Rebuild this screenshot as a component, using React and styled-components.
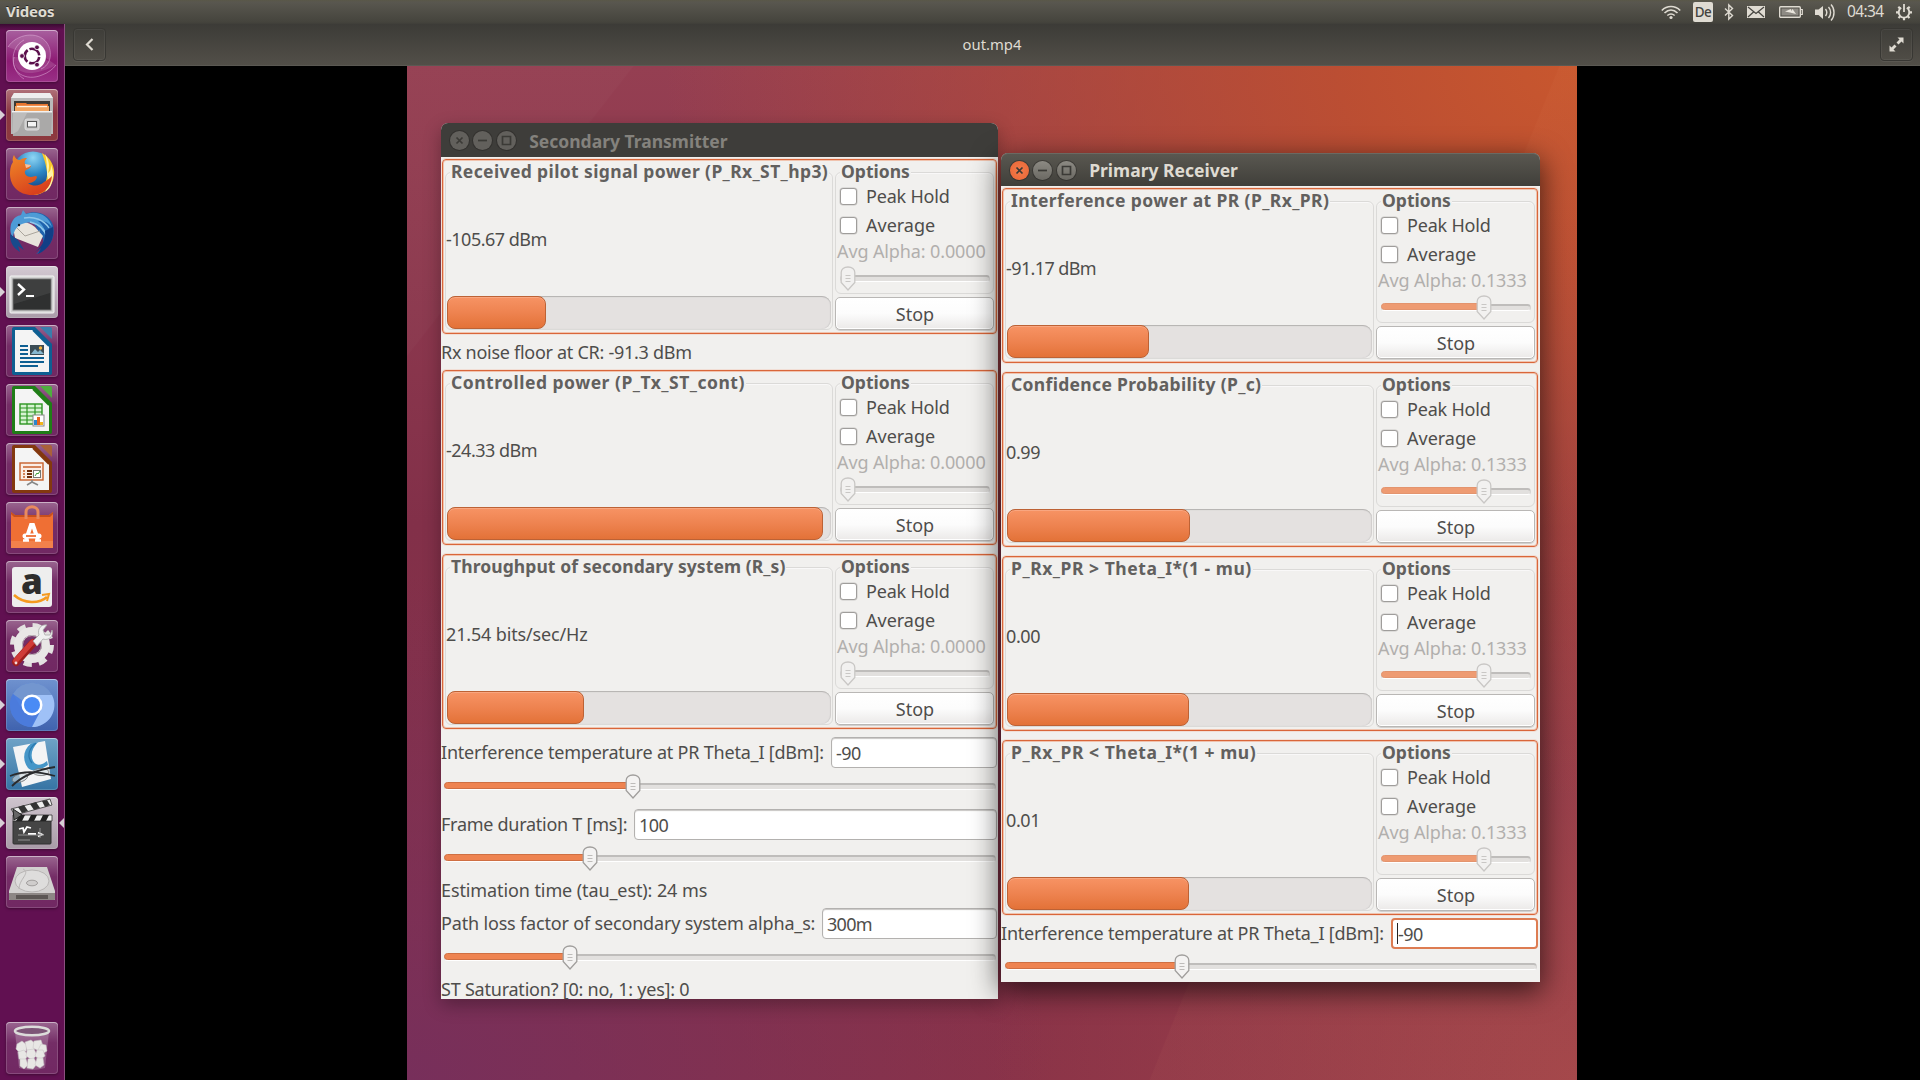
import React from "react";
import styled, { createGlobalStyle } from "styled-components";

const Global = createGlobalStyle`
  * { box-sizing: border-box; }
  body { margin: 0; background: #000; overflow: hidden; font-family: "Noto Sans", "Open Sans", sans-serif; }
`;

const Screen = styled.div`
  width: 1920px; height: 1080px; display: flex; flex-direction: column; overflow: hidden;
`;
const TopPanel = styled.header`
  height: 24px; flex: none; display: flex; align-items: center; justify-content: space-between;
  padding: 0 7px 0 6px; color: #dfdbd2; background: linear-gradient(#5a5848 0, #59574f 2px, #45443d 22px, #3f3e39);
`;
const AppName = styled.span`
  font-size: 15px; font-weight: 700; line-height: 22px; height: 24px; letter-spacing: -0.2px; white-space: nowrap; text-shadow: 0 -1px 0 #2b2a27;
`;
const Indicators = styled.div`display: flex; align-items: center; height: 24px;`;
const IndIcon = styled.svg`
  display: block; flex: none; width: ${p => p.$w}px; height: 24px; margin-right: ${p => p.$gap}px;
  fill: none; stroke: #dfdbd2; stroke-width: 1.6;
`;
const Keyboard = styled.span`
  width: 20px; height: 20px; margin-right: 11px; border-radius: 2px; background: #dfdbd2; color: #45443f;
  font-size: 13.5px; font-weight: 500; line-height: 20px; text-align: center; letter-spacing: -0.5px;
`;
const Clock = styled.span`width: 37px; margin-right: 11px; font-size: 15.5px; line-height: 22px; height: 24px; letter-spacing: -0.65px; white-space: nowrap;`;

const Main = styled.div`flex: 1; display: flex; min-height: 0;`;
const Launcher = styled.nav`
  width: 65px; flex: none; padding: 6px 0 6px 6px; display: flex; flex-direction: column; gap: 7px;
  background: linear-gradient(#3a0a32 0, #611051 6px, #611051 100%); border-right: 1px solid #8b4f7f;
`;
const Tile = styled.div`
  position: relative; width: 52px; height: 52px; flex: none; border-radius: 4px; background: ${p => p.$bg};
  box-shadow: inset 0 0 0 1px rgba(255,255,255,.16), inset 0 1px 0 rgba(255,255,255,.4), 0 1px 3px rgba(0,0,0,.35);
  margin-top: ${p => (p.$bottom ? "auto" : 0)};
  & > svg { display: block; width: 52px; height: 52px; }
`;
const Arrow = styled.i`
  position: absolute; top: 21px; width: 0; height: 0; border: 5px solid transparent;
  ${p => (p.$right ? "right: -6px; border-right-color: #d8d0d6; border-left: 0;" : "left: -6px; border-left-color: #d8d0d6; border-right: 0;")}
`;

const Player = styled.main`flex: 1; display: flex; flex-direction: column; min-width: 0;`;
const HeaderBar = styled.div`
  height: 42px; flex: none; display: flex; align-items: center; justify-content: space-between; padding: 0 7px 1px 8px;
  background: linear-gradient(#3c3b37, #524f48); border-bottom: 1px solid #5b5953; color: #dfdbd2;
`;
const HeaderButton = styled.button`
  width: 33px; height: 33px; padding: 0; border: 1px solid #383733; border-radius: 4px; color: #dfdbd2;
  background: transparent; box-shadow: inset 0 0 0 1px rgba(255,255,255,.05), 0 1px 0 rgba(255,255,255,.06);
  svg { display: block; width: 31px; height: 31px; }
`;
const FileName = styled.span`font-size: 14.8px; line-height: 24px; white-space: nowrap; margin-right: 2px;`;
const Stage = styled.div`flex: 1; min-height: 0; display: flex; background: #000; padding-left: 342px;`;
const Desktop = styled.section`
  position: relative; width: 1170px; height: 1014px; overflow: hidden;
  background:
    linear-gradient(128deg, rgba(255,255,255,.02) 0 11.5%, transparent 11.6%),
    linear-gradient(292deg, rgba(255,170,120,.04) 0 27%, transparent 27.1%),
    radial-gradient(ellipse 78% 72% at 100% 0%, #c8572e 0%, rgba(192,80,47,.9) 25%, rgba(176,68,52,0) 100%),
    radial-gradient(ellipse 55% 50% at 0% 100%, #772f5b 0%, rgba(118,47,92,0) 100%),
    radial-gradient(ellipse 50% 60% at 100% 100%, #a14449 0%, rgba(161,68,73,0) 100%),
    linear-gradient(#953f52, #823049 45%, #8a3348 100%);
`;

const Win = styled.article`
  position: absolute; left: ${p => p.$x}px; top: ${p => p.$y}px; width: ${p => p.$w}px; height: ${p => p.$h}px;
  display: flex; flex-direction: column; border-radius: 7px 7px 0 0; background: #f1f0ee; color: #4e4d4b;
  box-shadow: ${p => (p.$active ? "0 8px 28px 2px rgba(0,0,0,.62)" : "0 6px 18px rgba(0,0,0,.3)")};
`;
const TitleBar = styled.div`
  height: ${p => (p.$active ? 33 : 34)}px; flex: none; display: flex; align-items: center; padding: 1px 0 0 9px; gap: 4px; border-radius: 7px 7px 0 0;
  background: ${p => (p.$active ? "linear-gradient(#5a5851, #403f3a)" : "#3e3d3a")};
  box-shadow: ${p => (p.$active ? "inset 0 1px 0 #6b6962" : "none")};
`;
const WinButton = styled.span`
  width: 19px; height: 19px; border-radius: 50%; margin-right: .4px;
  background: ${p => (p.$close ? "radial-gradient(#f27c4c, #ea6534)" : p.$active ? "linear-gradient(#8c8a83,#6b6963)" : "#62605c")};
  box-shadow: 0 0 0 1px rgba(40,38,35,.5);
  svg { display: block; width: 19px; height: 19px; fill: none; stroke: #3b3a36; stroke-width: 1.7; }
`;
const Text = styled.span`
  display: inline-block; white-space: pre; line-height: 22px; font-size: 18px;
  letter-spacing: ${p => p.$ls || 0}px;
`;
const Title = styled(Text)`
  margin-left: 9px; font-weight: 700; font-size: 17.5px; color: ${p => (p.$active ? "#dfdbd2" : "#84827d")};
`;
const Body = styled.div`flex: 1; min-height: 0; display: flex; flex-direction: column; padding: 2px 1px 0 0;`;

const Meter = styled.section`
  width: ${p => p.$w}px; height: 175px; flex: none; margin: ${p => p.$mt || 0}px 0 0 1px; padding: 12px 2px 3px; display: flex; gap: 2px;
  border: 1px solid #d9663a; border-radius: 4px; box-shadow: inset 0 0 0 1px rgba(240,150,110,.5), 0 0 0 1px rgba(240,190,165,.35);
`;
const Frame = styled.div`
  display: flex; flex-direction: column; border: 1px solid #dbdad8; border-radius: 6px; box-shadow: inset 0 1px 0 #f9f8f8;
  width: ${p => (p.$w ? p.$w + "px" : "auto")}; height: ${p => (p.$h ? p.$h + "px" : "auto")};
`;
const Legend = styled(Text)`
  align-self: flex-start; flex: none; height: 21px; line-height: 21px; margin: -12px 0 1px 4px; padding: 0 1px;
  font-size: 17.5px; font-weight: 700; color: #62605e; background: #f1f0ee;
`;
const Value = styled.div`flex: 1; display: flex; align-items: center; padding-bottom: 2px;`;
const Progress = styled.div`
  height: 33px; margin: 0 1px; border-radius: 9px; background: #e4e1e0; box-shadow: inset 0 2px 1px -1px #b4b2b0, inset -1px 0 1px #d0cecd;
`;
const Fill = styled.div`
  height: 33px; border-radius: 8px; border: 1px solid #bd6235;
  background: linear-gradient(#f79364, #ee8350 50%, #e37238); box-shadow: inset 0 1px 0 #f9a680;
`;
const OptionsCol = styled.div`flex: 1; display: flex; flex-direction: column; gap: 3px;`;
const Check = styled.label`
  height: ${p => p.$h}px; flex: none; display: flex; align-items: center; gap: 9px; padding: 0 0 2px 4px;
`;
const Box = styled.span`
  width: 17px; height: 17px; border: 1px solid #9f9d9b; border-radius: 3px; background: #fff; box-shadow: 0 0 0 .5px #c9c7c5;
`;
const Alpha = styled(Text)`height: 21px; line-height: 20px; color: #b1afad; padding-left: 1px;`;
const StopButton = styled.button`
  height: 33px; padding: 0 0 0 1px; border: 1px solid #b9b7b5; border-radius: 5px; font-family: inherit; color: #4e4d4b;
  background: linear-gradient(#fff, #fcfcfc 50%, #ebe9e8); box-shadow: 0 1px 0 #d2d0ce, inset 0 0 0 1px #fff;
`;
const SliderBox = styled.div`
  position: relative; height: 24px; flex: none; display: flex; align-items: center;
  margin: ${p => p.$m};
`;
const Track = styled.div`
  flex: 1; height: 7px; border-radius: 4px; background: #e2e0de; border: 1px solid #d6d4d2; border-top: 2px solid #bfbdbb; border-bottom-color: #fff;
`;
const TrackFill = styled.div`
  position: absolute; left: 0; top: 8px; height: 7px; border-radius: 4px;
  background: ${p => (p.$off ? "#ee9b72" : "#ee8350")}; border: 1px solid ${p => (p.$off ? "#e3946e" : "#cf6f42")};
`;
const Thumb = styled.svg`position: absolute; top: 0; width: 16px; height: 25px;`;
const Row = styled.div`height: ${p => p.$h}px; flex: none; padding-top: ${p => p.$pt || 0}px; display: flex; align-items: center;`;
const EntryRow = styled.div`height: 31px; flex: none; margin-top: ${p => p.$mt}px; display: flex; align-items: center;`;
const EntryLabel = styled.div`width: ${p => p.$w}px; flex: none;`;
const Entry = styled.div`
  flex: 1; height: 31px; display: flex; align-items: center; padding-left: 4px; background: #fff; border-radius: 4px;
  border: ${p => (p.$focus ? "2px solid #dd7c52" : "1px solid #b3b1af")};
  box-shadow: ${p => (p.$focus ? "none" : "inset 0 1px 1px #c8c6c4")}; margin-right: ${p => p.$mr || 0}px;
`;
const Caret = styled.i`width: 1px; height: 21px; background: #222;`;

function Slider({ at, off, m = "0", filled = true }) {
  return (
    <SliderBox $m={m}>
      <Track />
      {filled && <TrackFill $off={off} style={{ width: at }} />}
      <Thumb viewBox="0 0 16 25" style={{ left: at - 8 }}>
        <path d="M1.2 6.5C1.2 3 4 1 8 1s6.8 2 6.8 5.500v10L8 24 1.200 16.500z" fill={off ? "#f2f1f0" : "#f4f3f2"} stroke={off ? "#c9c7c5" : "#a09e9c"} strokeWidth="1.300" />
        <path d="M5.500 9.500h5M5.500 12.500h5M5.500 15.500h5" stroke={off ? "#c9c7c5" : "#bebcba"} strokeWidth="1" />
      </Thumb>
    </SliderBox>
  );
}

function Panel({ w, frame, mt, name, ls, value, vls, fill, alpha, at }) {
  return (
    <Meter $w={w} $mt={mt}>
      <Frame $w={frame}>
        <Legend $ls={ls}>{name}</Legend>
        <Value><Text $ls={vls}>{value}</Text></Value>
        <Progress><Fill style={{ width: fill }} /></Progress>
      </Frame>
      <OptionsCol>
        <Frame $h={122}>
          <Legend>Options</Legend>
          <Check $h={28}><Box /><Text $ls={-0.2}>Peak Hold</Text></Check>
          <Check $h={30}><Box /><Text>Average</Text></Check>
          <Alpha $ls={-0.12}>Avg Alpha: {alpha}</Alpha>
          <Slider at={at} off filled={at > 20} m="4px 3px 0 4px" />
        </Frame>
        <StopButton><Text>Stop</Text></StopButton>
      </OptionsCol>
    </Meter>
  );
}

function Buttons({ active }) {
  return (
    <>
      <WinButton $close={active} $active={active}><svg viewBox="0 0 19 19"><path d="M6.500 6.500l6 6M12.500 6.500l-6 6" /></svg></WinButton>
      <WinButton $active={active}><svg viewBox="0 0 19 19"><path d="M5 9.500h9" /></svg></WinButton>
      <WinButton $active={active}><svg viewBox="0 0 19 19"><path d="M5.500 5.500h8v8h-8z" /></svg></WinButton>
    </>
  );
}

const glass = "linear-gradient(rgba(255,255,255,.36), rgba(255,255,255,.12) 40%, rgba(255,255,255,.1))";

const Doc = ({ dark, mid, children }) => (
  <svg viewBox="0 0 52 52">
    <path d="M6 4q0-2 2-2h21l17 17v29q0 2-2 2H8q-2 0-2-2z" fill={dark} />
    <path d="M34 2h10q2 0 2 2v10z" fill={mid} />
    <path d="M9 5h18l16 16v26H9z" fill="#f4f4f4" />
    <path d="M27 5l16 16" stroke={dark} strokeWidth="2" />
    {children}
  </svg>
);

const icons = [
  { bg: "linear-gradient(#a8609f, #8d1b74 60%, #9a3086)", art: (
    <svg viewBox="0 0 52 52">
      <g fill="none" stroke="#d79fce" strokeOpacity=".6" strokeWidth="1">
        <path d="M2 17C10 4 32 0 41 13c6 9 4 22-6 26M8 27C4 42 20 52 36 45c6-2 11-6 14-10M18 49C4 40 3 18 18 10" />
      </g>
      <path d="M2 17C10 4 32 0 41 13c3 6 4 12 2 18L26 26zM8 27C6 42 22 50 50 35L40 28z" fill="#fff" fillOpacity=".13" />
      <circle cx="26" cy="26" r="14" fill="#fff" />
      <circle cx="26" cy="26" r="7.300" fill="none" stroke="#5b0f4c" strokeWidth="2.600" strokeDasharray="13.300 2" strokeDashoffset="-1" />
      <g fill="#5b0f4c" stroke="#fff" strokeWidth=".8"><circle cx="16" cy="26" r="2.400" /><circle cx="31" cy="17.300" r="2.400" /><circle cx="31" cy="34.700" r="2.400" /></g>
    </svg>) },
  { left: 1, bg: "linear-gradient(#b0727a, #8a3542 45%, #8d3a3e)", art: (
    <svg viewBox="0 0 52 52">
      <path d="M8 4h36l3 5v36H5V9z" fill="#b9b9b9" /><path d="M8 4h36l3 5H5z" fill="#eee" />
      <path d="M8 12h36v10H8z" fill="#3d3a36" />
      <path d="M10 14h10l1 1h21v7H10z" fill="#e9762f" /><path d="M9 17h34v5H9z" fill="#f4a763" /><path d="M11 17.500h30" stroke="#fff3e2" strokeWidth="1.400" />
      <path d="M6 22h40l-1 25H7z" fill="#aaa9a8" /><path d="M6 22h40v1.500H6z" fill="#f1f1f1" /><path d="M7 24h14L12 42l-5 3z" fill="#bdbcbb" />
      <rect x="19" y="30" width="14" height="11" rx="2" fill="#cbcaca" stroke="#ddd" /><rect x="21.500" y="32.500" width="9" height="5.500" fill="#f4f4f4" stroke="#555" />
    </svg>) },
  { bg: glass, art: (
    <svg viewBox="0 0 52 52">
      <defs>
        <radialGradient id="ffb" cx=".5" cy=".15" r=".9"><stop offset="0" stopColor="#8fd6f4" /><stop offset=".45" stopColor="#2a86c4" /><stop offset="1" stopColor="#0c2a6b" /></radialGradient>
        <linearGradient id="ffo" x1="0" y1="0" x2=".5" y2="1"><stop offset="0" stopColor="#f08a28" /><stop offset="1" stopColor="#d8401d" /></linearGradient>
      </defs>
      <circle cx="27" cy="24" r="20.500" fill="url(#ffb)" />
      <path d="M36 5c9 5 13 14 12 22-1 12-10 20-21 20C36 42 42 34 41 24c-1-8-3-13-5-19z" fill="#f9c928" />
      <path d="M39 6c4 6 5 12 3 19 3-2 3-5 3-8 2 5 3 11 1 17-1 5-4 8-7 10 3-5 4-11 2-17 0-8 0-14-2-21z" fill="#fff3a8" />
      <path d="M8 7c1 3 3 5 6 5 3-2 5-2 7-2-2 2-3 4-2 6l6 2c-1 3-4 3-6 5-1 3 2 6 6 6 3 0 5-2 6 0-1 4-5 6-9 6 5 4 12 3 16-1 3-2 5-3 8-6-1 12-9 19-20 19C13 47 4 38 4 26c0-6 1-9 3-12-1-3 0-5 1-7z" fill="url(#ffo)" />
      <path d="M19 16l6 1c-1 2-3 2-5 3z" fill="#f5c3a0" />
    </svg>) },
  { bg: glass, art: (
    <svg viewBox="0 0 52 52">
      <path d="M13 12C22 1 42 4 47 18c3 13-4 25-17 29 6-5 8-10 7-15L24 10z" fill="#1f62ac" />
      <path d="M7 20c5-8 14-6 22 0l8 9-5 11-23-9z" fill="#e8e4dc" /><path d="M10 20l9 9 15-5" fill="none" stroke="#aaa59c" />
      <path d="M5 17C8 10 11 9 15 8l2-5 3 4c11-4 23 1 26 13-4-5-9-7-14-6 4 3 8 9 8 15-6-12-16-16-24-12-5 2-8 6-9 13-3-3-3-8-2-13z" fill="#4d9bd6" />
      <path d="M18 11c10-2 20 2 25 10M24 15c9 2 15 8 17 16M37 22c4 5 4 13-1 20" fill="none" stroke="#8fc7ea" strokeWidth="1.400" />
      <path d="M4 27c0 10 4 14 10 18l-2-6 6 4-6-10z" fill="#174a8c" /><path d="M47 20c2 12-4 22-15 27l3-6-6 4c7-5 11-13 10-21z" fill="#123f86" />
      <circle cx="13" cy="18" r="1.200" fill="#123" />
    </svg>) },
  { left: 1, bg: "linear-gradient(#d3c9d2, #a99ba8)", art: (
    <svg viewBox="0 0 52 52">
      <rect x="4" y="10" width="44" height="37" rx="1" fill="#d2d2d2" stroke="#f5f5f5" />
      <rect x="7" y="13" width="38" height="31" fill="#2f3030" stroke="#777" /><path d="M8 14h36v13L8 38z" fill="#4b4c4c" opacity=".55" />
      <path d="M12 18l6 5.500-6 5.500" fill="none" stroke="#fff" strokeWidth="2.400" /><path d="M20 30h8" stroke="#fff" strokeWidth="2" />
    </svg>) },
  { bg: glass, art: (
    <Doc dark="#0e5f92" mid="#3a7dab">
      <path d="M14 21h8M14 25h8M14 29h8M14 33h24M14 37h24M14 41h18" stroke="#0e5f92" strokeWidth="1.800" />
      <rect x="24" y="20" width="14" height="10" fill="#3b4c55" /><path d="M25 29l4-5 3 3 2-2 4 4z" fill="#86b7cf" /><circle cx="34.500" cy="23" r="1.700" fill="#f4b63d" />
    </Doc>) },
  { bg: glass, art: (
    <Doc dark="#1f7d17" mid="#4fae3f">
      <rect x="14" y="20" width="22" height="20" fill="#d7f3d2" stroke="#2b9420" strokeWidth="1.400" />
      <path d="M14 24h22M14 28h22M14 32h22M14 36h22M21 20v20M29 20v20" stroke="#2b9420" strokeWidth="1.200" />
      <rect x="27" y="31" width="11" height="11" fill="#fff" stroke="#888" /><path d="M28 36h3v5h-3z" fill="#2a86cf" /><path d="M31 33h3v8h-3z" fill="#e8631d" /><path d="M34 38h3v3h-3z" fill="#f1b51c" />
    </Doc>) },
  { bg: glass, art: (
    <Doc dark="#83380f" mid="#a9603a">
      <rect x="14" y="20" width="23" height="17" fill="#fbeee6" stroke="#c7602b" strokeWidth="1.400" />
      <path d="M17 24h18" stroke="#c7602b" strokeWidth="1.500" /><path d="M17 28h2M17 31h2M17 34h2" stroke="#c7602b" strokeWidth="1.500" /><path d="M21 28h5M21 31h5M21 34h5" stroke="#6d2d0d" strokeWidth="1.800" />
      <rect x="27.500" y="27.500" width="7" height="7" fill="#fff" stroke="#777" /><path d="M29 33l2-3 1 1 2-3" fill="none" stroke="#3c9d3a" />
      <path d="M26 37v2l-5 3M26 39l6 3" fill="none" stroke="#888" strokeWidth="1.600" />
    </Doc>) },
  { bg: glass, art: (
    <svg viewBox="0 0 52 52">
      <path d="M5 10l4 3h34l4-3v36H5z" fill="#ef6f34" /><path d="M5 10l4 3h34l4-3v2l-3 3H8l-3-3z" fill="#c74f1d" /><path d="M5 39h42v7H5z" fill="#f2814b" />
      <path d="M20 17v-7c0-7 12-7 12 0v7" fill="none" stroke="#e98a5e" strokeWidth="3" />
      <path d="M20 38l5-15h2l5 15" fill="none" stroke="#fff" strokeWidth="4" /><path d="M19 34h14" stroke="#fff" strokeWidth="5" strokeLinecap="round" /><path d="M20 34h10" stroke="#ef6f34" strokeWidth="1.800" /><path d="M17 38.500h6M29 38.500h6" stroke="#fff" strokeWidth="2.600" />
    </svg>) },
  { bg: glass, art: (
    <svg viewBox="0 0 52 52">
      <rect x="6" y="6" width="40" height="40" rx="3" fill="#eeeeee" />
      <text x="26" y="33" textAnchor="middle" fontFamily="Open Sans, sans-serif" fontWeight="800" fontSize="35" fill="#2d2d2d">a</text>
      <path d="M8 34c10 9 25 9 33 2" fill="none" stroke="#f59a1f" strokeWidth="2.600" /><path d="M36 34l7-1-2 7" fill="none" stroke="#f59a1f" strokeWidth="2" />
    </svg>) },
  { bg: glass, art: (
    <svg viewBox="0 0 52 52">
      <circle cx="26" cy="25" r="19" fill="none" stroke="#e3e1e0" strokeWidth="6" strokeDasharray="8 6.920" />
      <circle cx="26" cy="25" r="14" fill="none" stroke="#e9e7e6" strokeWidth="8" /><circle cx="26" cy="25" r="9.500" fill="none" stroke="#c2bfbe" />
      <path d="M10 42l17-19" stroke="#9f1f1e" strokeWidth="8" strokeLinecap="round" /><path d="M9.500 41l17-19" stroke="#d03c38" strokeWidth="5" strokeLinecap="round" /><circle cx="10" cy="43" r="1.400" fill="#f3dada" />
      <path d="M27 21l6-6c-2-6 2-11 8-10l-4 5 2 5 5 0 2-5c2 6-3 11-9 9l-6 7z" fill="#f0f0f0" stroke="#aaa" strokeWidth=".8" />
    </svg>) },
  { left: 1, bg: "linear-gradient(#6f92cf, #3f62ae)", art: (
    <svg viewBox="0 0 52 52">
      <circle cx="26" cy="26" r="22" fill="#4c7fe0" /><path d="M26 16h20A22 22 0 0 1 26 48l9-17z" fill="#9fc1f7" />
      <path d="M7 15a22 22 0 0 1 39 1H26a10 10 0 0 0-9 6z" fill="#7396cf" /><path d="M7 15l10 17c3 5 9 5 14 3l-6 13A22 22 0 0 1 7 15z" fill="#4b7bdc" />
      <circle cx="26" cy="26" r="10.500" fill="#fff" /><circle cx="26" cy="26" r="8" fill="#4a8bf5" />
    </svg>) },
  { left: 1, bg: "linear-gradient(#6fa3c7, #3674a4)", art: (
    <svg viewBox="0 0 52 52">
      <path d="M7 9l32-6 6 38-29 8z" fill="#f3f4f5" />
      <path d="M25 5.500C17 12 16 22 22 30c4 4 12 3 20-3l-1-4c-6 5-11 5-14 0-3-6-1-13 5-19z" fill="#4596c8" /><path d="M30 5c-8 6-9 14-4 20" fill="none" stroke="#2a78ad" strokeWidth="1.200" />
      <ellipse cx="14" cy="40" rx="8" ry="4" fill="#cfd8de" fillOpacity=".6" stroke="#777" strokeWidth=".8" transform="rotate(-18 14 40)" /><ellipse cx="35" cy="34" rx="8" ry="3.600" fill="#cfd8de" fillOpacity=".6" stroke="#777" strokeWidth=".8" />
      <path d="M6 48C16 38 30 32 49 29M4 38c14-6 28-5 45 0" fill="none" stroke="#2a2b2d" strokeWidth="1.800" />
    </svg>) },
  { left: 1, right: 1, bg: "linear-gradient(#cfc5ce, #a99ba8)", art: (
    <svg viewBox="0 0 52 52">
      <path d="M7 24h38v22q0 1-1 1H8q-1 0-1-1z" fill="#454545" stroke="#303030" />
      <path d="M7 18h39v6H7z" fill="#eee" stroke="#333" strokeWidth=".8" /><path d="M13 18h6l-3 6h-6zM25 18h6l-3 6h-6zM37 18h6l-3 6h-6z" fill="#222" />
      <path d="M5 12L44 2l2 6L9 18z" fill="#eee" stroke="#333" strokeWidth=".8" /><path d="M12 10l6-2 4 6-6 2zM24 7l6-2 4 6-6 2zM36 4l5-1 3 5-5 2z" fill="#333" />
      <path d="M7 12l9 6-8 5z" fill="#666" stroke="#222" />
      <path d="M13 32l4-1 1 4 3-5 4 1M22 37h8M32 35.500l4 2-4 2" fill="none" stroke="#fff" strokeWidth="1.800" /><path d="M12 38h26M12 43h12M34 31v10" stroke="#999" strokeWidth=".9" />
    </svg>) },
  { bg: glass, art: (
    <svg viewBox="0 0 52 52">
      <path d="M11 11h30l8 24v8q0 1-1 1H4q-1 0-1-1v-8z" fill="#d3d1d0" /><path d="M3 37h46v6q0 1-1 1H4q-1 0-1-1z" fill="#8d8785" /><path d="M10 39h32v4H10z" fill="#5c5654" />
      <ellipse cx="26" cy="25" rx="17" ry="11" fill="#dedddc" stroke="#b8b5b4" /><ellipse cx="26" cy="27" rx="5.500" ry="2.800" fill="#cfcdcc" stroke="#a19e9d" /><path d="M17 13c8 4-4 10-4 20" fill="none" stroke="#b8b5b4" />
    </svg>) },
  { bottom: 1, bg: glass, art: (
    <svg viewBox="0 0 52 52">
      <path d="M9 10l4 36q13 4 26 0l4-36z" fill="#e9dfe8" fillOpacity=".25" /><ellipse cx="26" cy="9" rx="17" ry="4.200" fill="#7d5577" stroke="#dcdcda" strokeWidth="2.600" />
      <g fill="#e8e7e5" stroke="#c4c1c2" strokeWidth=".5">
        <path d="M11 22l5-3 5 4-1 6-6 2-4-4z" /><path d="M19 20l6-2 5 4-2 6-7 1z" /><path d="M28 19l7-1 2 6-4 5-6-3z" /><path d="M35 22l5 1 1 6-5 3-4-4z" />
        <path d="M12 30l6-2 4 5-3 5-6-1z" /><path d="M21 28l7-1 3 6-5 5-6-4z" /><path d="M31 28l6 0 2 6-5 4-5-4z" />
        <path d="M14 37l6 0 2 6-4 4-4-3z" /><path d="M22 37l6-1 3 6-4 5-6-1z" /><path d="M31 36l6 0 1 7-4 3-5-3z" />
      </g>
    </svg>) },
];

export default function App() {
  return (
    <Screen>
      <Global />
      <TopPanel>
        <AppName>Videos</AppName>
        <Indicators>
          <IndIcon $w={20} $gap={12} viewBox="0 0 20 24">
            <path d="M.8 10.500C6 5.200 14 5.200 19.200 10.500M3.500 13C7.500 9.200 12.500 9.200 16.500 13M6.300 15.500c2.400-2 5-2 7.400 0" /><circle cx="10" cy="17.500" r="1.600" fill="#dfdbd2" stroke="none" />
          </IndIcon>
          <Keyboard>De</Keyboard>
          <IndIcon $w={10} $gap={13} viewBox="0 0 10 24"><path d="M1 8.500l7.500 7-3.700 3.500V5l3.700 3.500-7.500 7" strokeWidth="1.400" /></IndIcon>
          <IndIcon $w={18} $gap={14} viewBox="0 0 18 24"><rect x="0" y="6" width="18" height="12" fill="#dfdbd2" stroke="none" /><path d="M1 7l8 6.500L17 7M1 17l5.500-5M17 17l-5.500-5" stroke="#45443f" strokeWidth="1.200" /></IndIcon>
          <IndIcon $w={24} $gap={12} viewBox="0 0 24 24"><rect x=".7" y="6.700" width="20.600" height="10.600" rx="1" strokeWidth="1.400" /><rect x="2.500" y="8.500" width="17" height="7" fill="#8d8a83" stroke="none" /><path d="M22 9.500h1.300v5H22" strokeWidth="1.200" /><path d="M6 11.500l6-2.500v2.200l1.500-2.200 3.500 5-6-1.500z" fill="#e9e5dc" stroke="none" /></IndIcon>
          <IndIcon $w={20} $gap={12} viewBox="0 0 20 24"><path d="M0 9.500h3.500L8 6v13l-4.500-4H0z" fill="#dfdbd2" stroke="none" /><path d="M10.500 9c1.500 2 1.500 5 0 7M13.500 7c2.800 3 2.800 8 0 11M16 4.500c4 4 4 12 0 16" strokeWidth="1.400" /></IndIcon>
          <Clock>04:34</Clock>
          <IndIcon $w={18} $gap={0} viewBox="0 0 18 24"><path d="M9 4v8" strokeWidth="1.800" /><path d="M6.200 7.800a5.300 5.300 0 1 0 5.600 0" strokeWidth="1.900" /><path d="M1 12.300h2.600M14.400 12.300H17M3.500 18l1.800-1.800M14.500 18l-1.800-1.800M9 17.500v2.700M3.300 6.800l1.900 1.800M14.700 6.800l-1.900 1.800" strokeWidth="2.200" /></IndIcon>
        </Indicators>
      </TopPanel>
      <Main>
        <Launcher>
          {icons.map((it, i) => (
            <Tile key={i} $bg={it.bg} $bottom={it.bottom}>
              {it.art}
              {it.left && <Arrow />}
              {it.right && <Arrow $right />}
            </Tile>
          ))}
        </Launcher>
        <Player>
          <HeaderBar>
            <HeaderButton><svg viewBox="0 0 31 31"><path d="M18.500 10l-5.500 5.500 5.500 5.500" fill="none" stroke="currentColor" strokeWidth="2.200" /></svg></HeaderButton>
            <FileName>out.mp4</FileName>
            <HeaderButton><svg viewBox="0 0 31 31"><path d="M16.500 8.500H22.500V14.500L20.500 12.500 17.500 15.500 15.500 13.500 18.500 10.500zM14.500 22.500H8.500V16.500L10.500 18.500 13.500 15.500 15.500 17.500 12.500 20.500z" fill="currentColor" /></svg></HeaderButton>
          </HeaderBar>
          <Stage>
            <Desktop>
              <Win $x={34} $y={57} $w={557} $h={876}>
                <TitleBar><Buttons /><Title>Secondary Transmitter</Title></TitleBar>
                <Body>
                  <Panel w={555} frame={388} name="Received pilot signal power (P_Rx_ST_hp3)" ls={0.38} value="-105.67 dBm" vls={-0.5} fill={99} alpha="0.0000" at={8} />
                  <Row $h={36}><Text $ls={-0.28}>Rx noise floor at CR: -91.3 dBm</Text></Row>
                  <Panel w={555} frame={388} name="Controlled power (P_Tx_ST_cont)" ls={0.5} value="-24.33 dBm" vls={-0.5} fill={376} alpha="0.0000" at={8} />
                  <Panel w={555} frame={388} mt={9} name="Throughput of secondary system (R_s)" ls={0.08} value="21.54 bits/sec/Hz" vls={-0.15} fill={137} alpha="0.0000" at={8} />
                  <EntryRow $mt={8}><EntryLabel $w={390}><Text $ls={-0.2}>Interference temperature at PR Theta_I [dBm]:</Text></EntryLabel><Entry><Text $ls={-0.5}>-90</Text></Entry></EntryRow>
                  <Slider at={189} m="6px 1px 0 3px" />
                  <EntryRow $mt={11}><EntryLabel $w={193}><Text $ls={-0.27}>Frame duration T [ms]:</Text></EntryLabel><Entry><Text $ls={-0.6}>100</Text></Entry></EntryRow>
                  <Slider at={146} m="6px 1px 0 3px" />
                  <Row $h={38} $pt={2}><Text $ls={-0.1}>Estimation time (tau_est): 24 ms</Text></Row>
                  <EntryRow $mt={0}><EntryLabel $w={381}><Text $ls={-0.17}>Path loss factor of secondary system alpha_s:</Text></EntryLabel><Entry><Text $ls={-0.7}>300m</Text></Entry></EntryRow>
                  <Slider at={125.5} m="6px 1px 0 3px" />
                  <Row $h={30} $pt={10}><Text $ls={-0.22}>ST Saturation? [0: no, 1: yes]: 0</Text></Row>
                </Body>
              </Win>
              <Win $active $x={594} $y={87} $w={539} $h={829}>
                <TitleBar $active><Buttons active /><Title $active>Primary Receiver</Title></TitleBar>
                <Body>
                  <Panel w={536} frame={369} name="Interference power at PR (P_Rx_PR)" ls={0.4} value="-91.17 dBm" vls={-0.6} fill={142} alpha="0.1333" at={103} />
                  <Panel w={536} frame={369} mt={9} name="Confidence Probability (P_c)" ls={0.33} value="0.99" vls={-0.4} fill={183} alpha="0.1333" at={103} />
                  <Panel w={536} frame={369} mt={9} name="P_Rx_PR > Theta_I*(1 - mu)" ls={0.54} value="0.00" vls={-0.4} fill={182} alpha="0.1333" at={103} />
                  <Panel w={536} frame={369} mt={9} name="P_Rx_PR < Theta_I*(1 + mu)" ls={0.54} value="0.01" vls={-0.4} fill={182} alpha="0.1333" at={103} />
                  <EntryRow $mt={3}><EntryLabel $w={390}><Text $ls={-0.2}>Interference temperature at PR Theta_I [dBm]:</Text></EntryLabel><Entry $focus $mr={1}><Caret /><Text $ls={-0.5}>-90</Text></Entry></EntryRow>
                  <Slider at={176.5} m="5px 2px 0 4px" />
                </Body>
              </Win>
            </Desktop>
          </Stage>
        </Player>
      </Main>
    </Screen>
  );
}
